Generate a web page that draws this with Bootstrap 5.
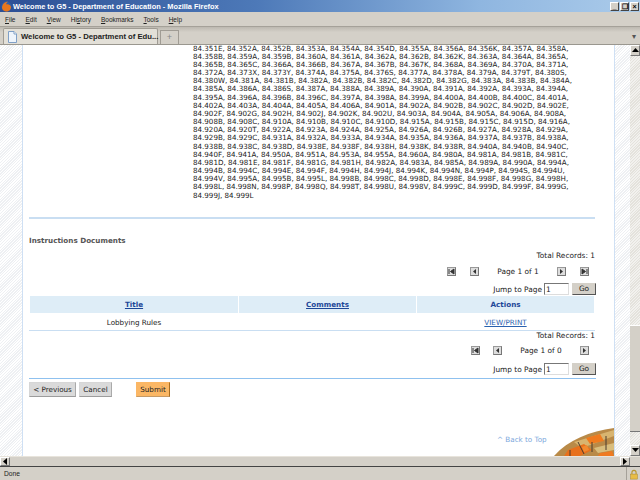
<!DOCTYPE html>
<html lang="en">
<head>
<meta charset="utf-8">
<title>Welcome to G5 - Department of Education - Mozilla Firefox</title>
<link rel="stylesheet" href="https://cdn.jsdelivr.net/npm/bootstrap@5.3.0/dist/css/bootstrap.min.css">
<style>
html,body{margin:0;width:640px;height:480px;overflow:hidden;background:#d4d0c8}
body{font-family:"DejaVu Sans",sans-serif;font-size:7.2px;color:#222}
.win{width:640px;height:480px;overflow:hidden}
.ttl{height:12px;background:linear-gradient(90deg,#2c4f95 0,#4d79b8 40%,#8fb6e0 75%,#abcbea 100%);color:#fff;font:bold 7.4px/11px "Liberation Sans",sans-serif;padding-left:1px;gap:1px;flex:none}
.wbtn{width:9px;height:9px;background:#d4d0c8;border:1px solid #444;border-top-color:#fff;border-left-color:#fff;font:bold 7px/7px "Liberation Sans",sans-serif;color:#000;text-align:center}
.wbtns{margin-left:auto;gap:1px;padding-right:1px}
.mnu{height:15px;background:#d4d0c8;border-bottom:1px solid #a5a199;font:6.5px/15px "Liberation Sans",sans-serif;color:#222;flex:none;padding-left:5px;gap:10px}
.tbs{height:18px;background:linear-gradient(#bdb9b1,#d4d0c8 30%);border-bottom:1px solid #9a978f;flex:none;padding-left:3px;align-items:flex-end}
.tb1{width:155px;height:16px;background:#e3e0d8;border:1px solid #a09c94;border-bottom:0;border-radius:2px 2px 0 0;font:bold 7.7px/15px "Liberation Sans",sans-serif;color:#222;padding-left:4px;gap:4px;white-space:nowrap;align-items:center}
.tb1 svg{flex:none}
.tb2{width:19px;height:14px;margin-left:2px;background:#d4d0c8;border:1px solid #a09c94;border-bottom:0;color:#888;font:9px/12px "Liberation Sans",sans-serif;text-align:center}
.tbd{margin-left:auto;width:12px;color:#555;font:8px/14px "Liberation Sans",sans-serif;text-align:center}
.mid{height:411px;flex:none}
.vp{width:630px;height:411px;overflow:hidden;background:repeating-linear-gradient(135deg,#fff 0 1px,#eef0f3 1px 2px);position:relative}
.pg{position:absolute;left:22px;width:593px;top:0;height:411px;background:#fff;border-left:1px solid #cfe0f4;border-right:1px solid #cfe0f4;padding:0 19px 0 6px;overflow:hidden}
.codes{margin:-.5px 0 0 164px;line-height:8.17px;font-size:7.13px;color:#222;white-space:pre}
.rule1{height:2px;background:#c9def2;margin-top:17px}
.h-doc{font-weight:700;color:#555;font-size:7.2px;line-height:10px;margin-top:17px}
.tot{text-align:right;line-height:10px;height:10px;font-size:7.4px;color:#222}
.gap5{margin-top:5px}.gap3{margin-top:3px}.gap2{margin-top:2px}
.pgr{height:16px;align-items:center;font-size:7.4px;color:#222;padding-right:6px}
.ico{width:9px;height:9px;background:#ddd;border:1px solid #999;border-right-color:#777;border-bottom-color:#777;flex:none;display:flex;align-items:center;justify-content:center}
.gapa{margin-left:14px}.gapb{margin-left:13px}.gapc{margin-left:8px}
.ptxt{width:62px;text-align:center}
.jmp{justify-content:flex-end;align-items:center;font-size:7.4px;height:13px;gap:2px;margin-right:-1px}
.jin{width:25px;height:12px;border:1px solid #777;border-right-color:#ddd;border-bottom-color:#ddd;background:#fff;padding:0 1px;font:7.4px/10px "DejaVu Sans",sans-serif;color:#222;border-radius:0}
.gob{width:24px;height:12px;padding:0;background:#d4d0c8;border:1px solid #d4d0c8;border-right-color:#555;border-bottom-color:#555;font:7.4px/10px "DejaVu Sans",sans-serif;color:#222;border-radius:0;margin-left:1px}
.table.tblw{width:566px;margin:0;table-layout:fixed;border-collapse:separate;border-spacing:1px 0;--bs-table-bg:transparent;--bs-table-border-color:transparent}
.table.tblw>:not(caption)>*>*{padding:0;border:0;font-size:7.2px;line-height:9px;text-align:center;vertical-align:middle;box-shadow:none}
.table.tblw th{height:17px;background:#deedf7;color:#1d4798;font-weight:700}
.tblw th a{color:#1d4798}
.table.tblw>tbody>tr>td{height:17px;color:#222;padding-top:2px}
.tblw td a{color:#2a62ae}
.tbline{height:1px;background:#c9def2;width:566px}
.rule2{height:1px;background:#8fc1ef;width:567px;margin-top:2px}
.acts{margin-top:3px;gap:3px;width:567px}
.btn.bt{height:15px;padding:0;font:7.2px/13px "DejaVu Sans",sans-serif;color:#222;background:#dadada;border:1px solid #d6d6d6;border-bottom-color:#9c9c9c;border-right-color:#aaa;border-radius:0}
.btn.bt1{width:47px}.btn.bt2{width:33px}
.btn.bt3{width:34px;margin-left:21px;background:#fbb765;border-color:#fbb765;border-right-color:#a86e22;border-bottom-color:#c69a66}
.btop{color:#7aa7dc;font-size:7.2px;line-height:10px;margin:38px 0 0 468px;white-space:nowrap}
.art{position:absolute;right:0;bottom:0;width:60px;height:28px}
.vbar{width:10px;height:411px;background:repeating-linear-gradient(135deg,#f2f1ee 0 1px,#e4e2dc 1px 2px);flex:none;justify-content:space-between}
.sbb{width:10px;height:11px;background:#d4d0c8;border:1px solid #777;border-top-color:#fff;border-left-color:#fff;display:flex;align-items:center;justify-content:center;flex:none}
.thumb{height:107px;background:#d4d0c8;border-top:1px solid #fff;border-bottom:1px solid #777;margin-top:auto;flex:none}
.sp13{height:13px;flex:none}
.hbar{height:11px;background:#d4d0c8;border-top:1px solid #e8e4dc;border-bottom:1px solid #444;flex:none;justify-content:space-between}
.hbar .sbb{height:9px}
.cnr{width:10px}
.stat{height:13px;background:#d4d0c8;font:6.7px/13px "Liberation Sans",sans-serif;color:#222;padding-left:4px;flex:none;justify-content:space-between}
.lockb{border-left:1px solid #a5a199;padding:0 1px 0 2px}
</style>
</head>
<body>
<div class="win d-flex flex-column">
  <div class="ttl d-flex align-items-center">
    <svg width="11" height="11" viewBox="0 0 11 11"><circle cx="5.500" cy="5.500" r="5" fill="#2f5fa8"/><path d="M1 7C1 3 4 .5 7 .7 5.500 1.500 5 2.500 5.500 3.500 7.500 3 9.500 4 10 6 10 9 7.500 10.500 5.500 10.500 3 10.500 1.500 9 1 7Z" fill="#e8761c"/></svg>
    <span>Welcome to G5 - Department of Education - Mozilla Firefox</span>
    <div class="wbtns d-flex">
      <div class="wbtn">_</div><div class="wbtn">&#10064;</div><div class="wbtn">&#215;</div>
    </div>
  </div>
  <div class="mnu d-flex">
    <span><u>F</u>ile</span><span><u>E</u>dit</span><span><u>V</u>iew</span><span>Hi<u>s</u>tory</span><span><u>B</u>ookmarks</span><span><u>T</u>ools</span><span><u>H</u>elp</span>
  </div>
  <div class="tbs d-flex">
    <div class="tb1 d-flex">
      <svg width="9" height="12" viewBox="0 0 9 12"><path d="M.5.5H6L8.500 3V11.500H.5Z" fill="#eef4fb" stroke="#7f9fc6"/><path d="M6 .5V3H8.500" fill="#fff" stroke="#7f9fc6"/></svg>
      <span>Welcome to G5 - Department of Edu...</span>
    </div>
    <div class="tb2">+</div>
    <div class="tbd">&#9662;</div>
  </div>
  <div class="mid d-flex">
    <div class="vp">
      <div class="pg">
<div class="codes">84.351E, 84.352A, 84.352B, 84.353A, 84.354A, 84.354D, 84.355A, 84.356A, 84.356K, 84.357A, 84.358A,
84.358B, 84.359A, 84.359B, 84.360A, 84.361A, 84.362A, 84.362B, 84.362K, 84.363A, 84.364A, 84.365A,
84.365B, 84.365C, 84.366A, 84.366B, 84.367A, 84.367B, 84.367K, 84.368A, 84.369A, 84.370A, 84.371A,
84.372A, 84.373X, 84.373Y, 84.374A, 84.375A, 84.376S, 84.377A, 84.378A, 84.379A, 84.379T, 84.380S,
84.380W, 84.381A, 84.381B, 84.382A, 84.382B, 84.382C, 84.382D, 84.382G, 84.383A, 84.383B, 84.384A,
84.385A, 84.386A, 84.386S, 84.387A, 84.388A, 84.389A, 84.390A, 84.391A, 84.392A, 84.393A, 84.394A,
84.395A, 84.396A, 84.396B, 84.396C, 84.397A, 84.398A, 84.399A, 84.400A, 84.400B, 84.400C, 84.401A,
84.402A, 84.403A, 84.404A, 84.405A, 84.406A, 84.901A, 84.902A, 84.902B, 84.902C, 84.902D, 84.902E,
84.902F, 84.902G, 84.902H, 84.902J, 84.902K, 84.902U, 84.903A, 84.904A, 84.905A, 84.906A, 84.908A,
84.908B, 84.908C, 84.910A, 84.910B, 84.910C, 84.910D, 84.915A, 84.915B, 84.915C, 84.915D, 84.916A,
84.920A, 84.920T, 84.922A, 84.923A, 84.924A, 84.925A, 84.926A, 84.926B, 84.927A, 84.928A, 84.929A,
84.929B, 84.929C, 84.931A, 84.932A, 84.933A, 84.934A, 84.935A, 84.936A, 84.937A, 84.937B, 84.938A,
84.938B, 84.938C, 84.938D, 84.938E, 84.938F, 84.938H, 84.938K, 84.938R, 84.940A, 84.940B, 84.940C,
84.940F, 84.941A, 84.950A, 84.951A, 84.953A, 84.955A, 84.960A, 84.980A, 84.981A, 84.981B, 84.981C,
84.981D, 84.981E, 84.981F, 84.981G, 84.981H, 84.982A, 84.983A, 84.985A, 84.989A, 84.990A, 84.994A,
84.994B, 84.994C, 84.994E, 84.994F, 84.994H, 84.994J, 84.994K, 84.994N, 84.994P, 84.994S, 84.994U,
84.994V, 84.995A, 84.995B, 84.995L, 84.998B, 84.998C, 84.998D, 84.998E, 84.998F, 84.998G, 84.998H,
84.998L, 84.998N, 84.998P, 84.998Q, 84.998T, 84.998U, 84.998V, 84.999C, 84.999D, 84.999F, 84.999G,
84.999J, 84.999L</div>
        <div class="rule1"></div>
        <div class="h-doc">Instructions Documents</div>
        <div class="tot gap5">Total Records: 1</div>
        <div class="pgr d-flex justify-content-end gap3">
          <div class="ico"><svg width="7" height="7" viewBox="0 0 7 7"><path d="M1 1V6M6 1V6L2.500 3.500Z" fill="#333" stroke="#333"/></svg></div>
          <div class="ico gapa"><svg width="7" height="7" viewBox="0 0 7 7"><path d="M5 1V6L2 3.500Z" fill="#333"/></svg></div>
          <div class="ptxt gapc">Page 1 of 1</div>
          <div class="ico gapc"><svg width="7" height="7" viewBox="0 0 7 7"><path d="M2 1V6L5 3.500Z" fill="#333"/></svg></div>
          <div class="ico gapa"><svg width="7" height="7" viewBox="0 0 7 7"><path d="M6 1V6M1 1V6L4.500 3.500Z" fill="#333" stroke="#333"/></svg></div>
        </div>
        <div class="jmp d-flex gap3">Jump to Page <input class="jin" value="1" aria-label="Jump to Page"><button class="gob" type="button">Go</button></div>
        <table class="table tblw">
          <colgroup><col style="width:208px"><col style="width:177px"><col></colgroup>
          <thead><tr><th><a href="#">Title</a></th><th><a href="#">Comments</a></th><th>Actions</th></tr></thead>
          <tbody><tr><td>Lobbying Rules</td><td></td><td><a href="#">VIEW/PRINT</a></td></tr></tbody>
        </table>
        <div class="tbline"></div>
        <div class="tot">Total Records: 1</div>
        <div class="pgr d-flex justify-content-end gap2">
          <div class="ico"><svg width="7" height="7" viewBox="0 0 7 7"><path d="M1 1V6M6 1V6L2.500 3.500Z" fill="#333" stroke="#333"/></svg></div>
          <div class="ico gapb"><svg width="7" height="7" viewBox="0 0 7 7"><path d="M5 1V6L2 3.500Z" fill="#333"/></svg></div>
          <div class="ptxt gapc">Page 1 of 0</div>
          <div class="ico gapc"><svg width="7" height="7" viewBox="0 0 7 7"><path d="M2 1V6L5 3.500Z" fill="#333"/></svg></div>
        </div>
        <div class="jmp d-flex mt-1">Jump to Page <input class="jin" value="1" aria-label="Jump to Page"><button class="gob" type="button">Go</button></div>
        <div class="rule2"></div>
        <div class="acts d-flex">
          <button class="btn bt bt1" type="button">&lt; Previous</button>
          <button class="btn bt bt2" type="button">Cancel</button>
          <button class="btn bt bt3" type="button">Submit</button>
        </div>
        <div class="btop">^ Back to Top</div>
        <svg class="art" viewBox="0 0 60 28">
          <defs><clipPath id="arc"><path d="M0 28C14 12 36 3 60 0V28Z"/></clipPath></defs>
          <g clip-path="url(#arc)">
            <rect width="60" height="28" fill="#b98a48"/>
            <path d="M20 14L60 2V8L28 20Z" fill="#d8b470"/>
            <path d="M14 22L30 16 38 22 26 28H10Z" fill="#e8701c"/>
            <path d="M32 10L46 6 50 13 36 16Z" fill="#f07a1e"/>
            <path d="M40 20L60 15V22L44 25Z" fill="#d9bd7c"/>
            <path d="M28 19L33 17 35 22 30 24Z" fill="#f28a30"/>
            <path d="M46 25L58 23 60 28H44Z" fill="#ef7a22"/>
            <path d="M16 22V28M38 14V24M52 8V22M24 14L30 26" stroke="#4a3a2c" stroke-width="1" fill="none"/>
          </g>
        </svg>
      </div>
    </div>
    <div class="vbar d-flex flex-column">
      <div class="sbb"><svg width="7" height="5" viewBox="0 0 7 5"><path d="M3.500 0L7 4H0Z" fill="#000"/></svg></div>
      <div class="thumb"></div>
      <div class="sp13"></div>
      <div class="sbb"><svg width="7" height="5" viewBox="0 0 7 5"><path d="M0 0H7L3.500 4Z" fill="#000"/></svg></div>
    </div>
  </div>
  <div class="hbar d-flex">
    <div class="sbb"><svg width="5" height="7" viewBox="0 0 5 7"><path d="M4 0V7L0 3.500Z" fill="#000"/></svg></div>
    <div class="d-flex">
      <div class="sbb"><svg width="5" height="7" viewBox="0 0 5 7"><path d="M0 0V7L4 3.500Z" fill="#000"/></svg></div>
      <div class="cnr"></div>
    </div>
  </div>
  <div class="stat d-flex">
    <span>Done</span>
    <div class="lockb"><svg width="10" height="13" viewBox="0 0 12 13"><path d="M3.500 6V4A2.500 2.500 0 0 1 8.500 4V6" fill="none" stroke="#b8962c" stroke-width="1.300"/><rect x="2" y="6" width="8" height="6" fill="#e8bd45" stroke="#a8852a" stroke-width=".6"/></svg></div>
  </div>
</div>
<script src="https://cdn.jsdelivr.net/npm/bootstrap@5.3.0/dist/js/bootstrap.bundle.min.js"></script>
</body>
</html>
